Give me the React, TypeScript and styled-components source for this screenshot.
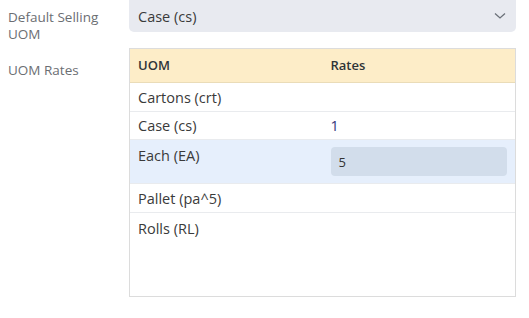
import React from 'react';
import styled, { createGlobalStyle } from 'styled-components';

const GlobalStyle = createGlobalStyle`
    html, body {
        margin: 0;
        padding: 0;
        background: #fff;
        font-family: "Open Sans", "Noto Sans", sans-serif;
        font-size: 14.5px;
        color: #333;
    }
`

const Page = styled.div`
    width: 516px;
    display: flex;
    flex-direction: column;
    gap: 5px;
`

const FieldRow = styled.div`
    display: grid;
    grid-template-columns: 129px 1fr;
    align-items: start;
`

const Label = styled.div<{ $top?: number }>`
    padding: ${p => p.$top || 0}px 20px 0 8px;
    font-size: 13.5px;
    line-height: 17px;
    color: #6b6e73;
`

const Select = styled.div`
    height: 32px;
    background: #e8eaf0;
    border-radius: 0 0 5px 5px;
    display: flex;
    align-items: center;
    justify-content: space-between;
    padding: 0 10px 0 9px;
    box-sizing: border-box;
    color: #3a3a3a;
    line-height: 17px;
`

const Chevron = () => (
    <svg width="12" height="8" viewBox="0 0 12 8" fill="none">
        <path d="M1 1.5 L6 6 L11 1.5" stroke="#6b7078" strokeWidth="1.3" />
    </svg>
)

const Table = styled.div`
    border: 1px solid #dcdcdc;
    height: 249px;
    box-sizing: border-box;
    display: flex;
    flex-direction: column;
    overflow: hidden;
`

const Row = styled.div<{ $head?: boolean; $active?: boolean; $h?: number; $last?: boolean }>`
    display: grid;
    grid-template-columns: 1fr 1fr;
    height: ${p => (p.$h ? `${p.$h}px` : 'auto')};
    flex: ${p => (p.$last ? '1' : 'none')};
    box-sizing: border-box;
    border-bottom: ${p => (p.$last ? 'none' : p.$head ? '1px solid #eadcb8' : '1px solid #e9ebee')};
    background: ${p => (p.$head ? '#fdedc8' : p.$active ? '#e6effc' : '#fff')};
    align-items: ${p => (p.$head || !p.$active && !p.$last ? 'center' : 'start')};
    font-weight: ${p => (p.$head ? 600 : 400)};
    font-size: ${p => (p.$head ? '13px' : 'inherit')};
    color: ${p => (p.$head ? '#2f3438' : '#3a3a3a')};
`

const Cell = styled.div<{ $pt?: number }>`
    padding: ${p => p.$pt || 0}px 8px 0 8px;
    line-height: 17px;
`

const Num = styled(Cell)`
    color: #34347a;
`

const RateInput = styled.div`
    height: 29px;
    margin-top: 7px;
    background: #d2ddeb;
    border-radius: 4px;
    display: flex;
    align-items: center;
    padding: 1px 8px 0;
    box-sizing: border-box;
    font-size: 13px;
    color: #333;
`

export default function App() {
    return (
        <>
            <GlobalStyle />
            <Page>
                <FieldRow>
                    <Label $top={9}>Default Selling UOM</Label>
                    <Select>
                        <span>Case (cs)</span>
                        <Chevron />
                    </Select>
                </FieldRow>
                <FieldRow>
                    <Label $top={14}>UOM Rates</Label>
                    <Table>
                        <Row $head $h={34}>
                            <Cell>UOM</Cell>
                            <Cell>Rates</Cell>
                        </Row>
                        <Row $h={29}>
                            <Cell>Cartons (crt)</Cell>
                            <Cell />
                        </Row>
                        <Row $h={28}>
                            <Cell>Case (cs)</Cell>
                            <Num>1</Num>
                        </Row>
                        <Row $active $h={44}>
                            <Cell $pt={7}>Each (EA)</Cell>
                            <Cell>
                                <RateInput>5</RateInput>
                            </Cell>
                        </Row>
                        <Row $h={29}>
                            <Cell>Pallet (pa^5)</Cell>
                            <Cell />
                        </Row>
                        <Row $last>
                            <Cell $pt={7}>Rolls (RL)</Cell>
                            <Cell />
                        </Row>
                    </Table>
                </FieldRow>
            </Page>
        </>
    );
}
